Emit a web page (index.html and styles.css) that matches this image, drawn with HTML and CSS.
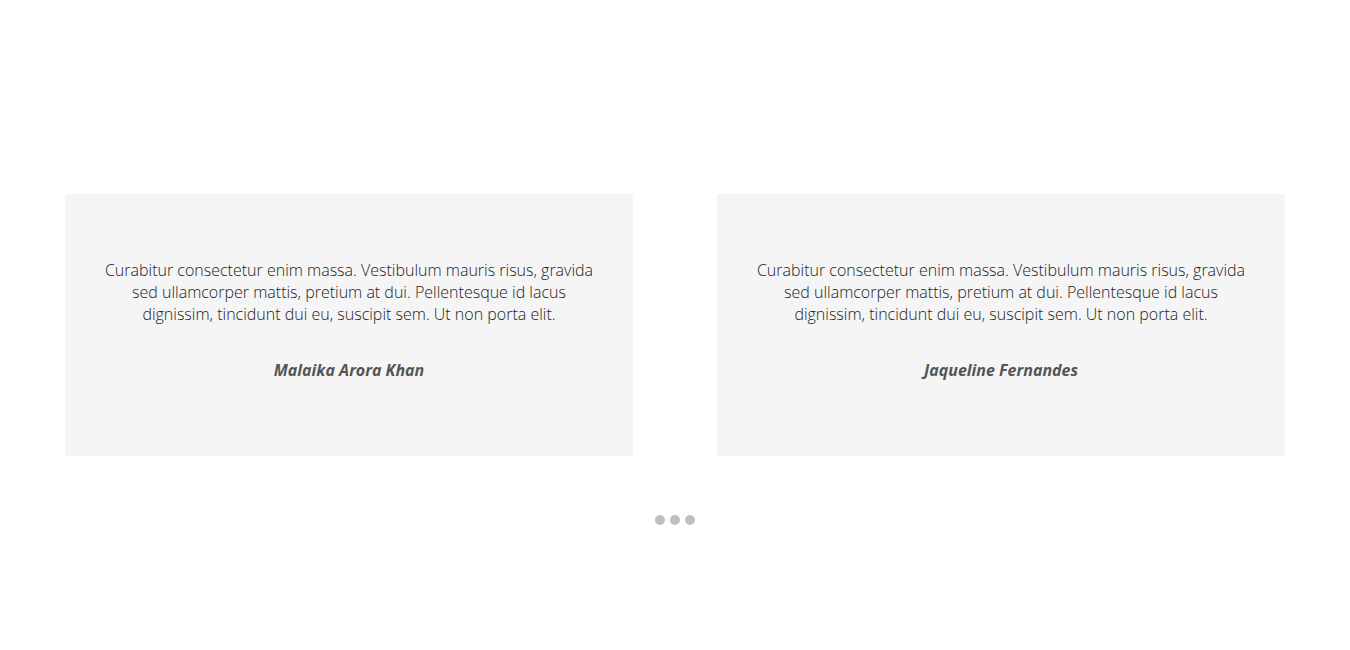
FILE: index.html
```html
<!DOCTYPE html>
<html>
<head>
<meta charset="utf-8">
<link rel="stylesheet" href="styles.css">
</head>
<body>
<section class="testimonials">
  <div class="cards">
    <div class="card">
      <p class="quote">Curabitur consectetur enim massa. Vestibulum mauris risus, gravida sed ullamcorper mattis, pretium at dui. Pellentesque id lacus dignissim, tincidunt dui eu, suscipit sem. Ut non porta elit.</p>
      <div class="name">Malaika Arora Khan</div>
    </div>
    <div class="card">
      <p class="quote">Curabitur consectetur enim massa. Vestibulum mauris risus, gravida sed ullamcorper mattis, pretium at dui. Pellentesque id lacus dignissim, tincidunt dui eu, suscipit sem. Ut non porta elit.</p>
      <div class="name">Jaqueline Fernandes</div>
    </div>
  </div>
  <div class="dots">
    <span class="dot"></span><span class="dot"></span><span class="dot"></span>
  </div>
</section>
</body>
</html>
```
FILE: styles.css
```css
html, body {
  margin: 0;
  padding: 0;
  background: #fff;
  font-family: "Open Sans", "Liberation Sans", sans-serif;
}
.testimonials {
  padding: 194px 65px 0;
}
.cards {
  display: flex;
  gap: 84px;
}
.card {
  flex: 1;
  background: #f5f5f5;
  padding: 65px 30px 75px;
  text-align: center;
  height: 262px;
  box-sizing: border-box;
}
.quote {
  margin: 0 0 34px;
  font-size: 16px;
  font-weight: 300;
  line-height: 22px;
  color: #222;
}
.name {
  font-size: 16px;
  font-weight: 700;
  font-style: italic;
  line-height: 22px;
  color: #555;
}
.dots {
  display: flex;
  justify-content: center;
  gap: 5px;
  margin-top: 59px;
}
.dot {
  width: 10px;
  height: 10px;
  border-radius: 50%;
  background: #bbc0c0;
}
```
